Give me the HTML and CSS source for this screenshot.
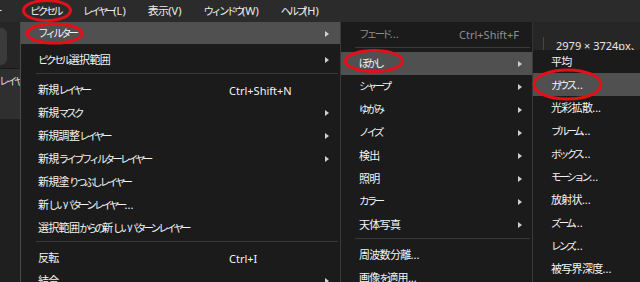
FILE: index.html
```html
<!DOCTYPE html>
<html lang="ja">
<head>
<meta charset="utf-8">
<title>Pixel menu</title>
<link rel="stylesheet" href="styles.css">
</head>
<body>
<div class="app">
  <nav class="menubar jp">
    <span class="mb-item mb-cut">ー</span>
    <span class="mb-item">ピクセル</span>
    <span class="mb-item">レイヤー<span class="a">(L)</span></span>
    <span class="mb-item"><span class="k">表示</span><span class="a">(V)</span></span>
    <span class="mb-item">ウィンドウ<span class="a">(W)</span></span>
    <span class="mb-item">ヘルプ<span class="a">(H)</span></span>
  </nav>
  <div class="toolbar">
    <div class="tool-btn"></div>
    <div class="tool-right"><span class="doc-info">2979 × 3724px、1</span></div>
  </div>
  <div class="panel-tab jp"><span class="tab-label">レイヤー</span></div>
  <div class="panel-body"></div>

  <ul class="menu menu-main">
    <li class="row active first"><span class="label jp">フィルター</span><span class="key"></span><i class="arrow"></i></li>
    <li class="row"><span class="label jp">ピクセル<span class="k">選択範囲</span></span><span class="key"></span><i class="arrow"></i></li>
    <li class="sep"></li>
    <li class="row"><span class="label jp"><span class="k">新規</span>レイヤー</span><span class="key">Ctrl+Shift+N</span></li>
    <li class="row"><span class="label jp"><span class="k">新規</span>マスク</span><span class="key"></span><i class="arrow"></i></li>
    <li class="row"><span class="label jp"><span class="k">新規調整</span>レイヤー</span><span class="key"></span><i class="arrow"></i></li>
    <li class="row"><span class="label jp"><span class="k">新規</span>ライブフィルターレイヤー</span><span class="key"></span><i class="arrow"></i></li>
    <li class="row"><span class="label jp"><span class="k">新規塗</span>りつぶしレイヤー</span></li>
    <li class="row"><span class="label jp"><span class="k">新</span>しいパターンレイヤー<span class="a">...</span></span></li>
    <li class="row"><span class="label jp"><span class="k">選択範囲</span>からの<span class="k">新</span>しいパターンレイヤー</span></li>
    <li class="sep"></li>
    <li class="row"><span class="label jp"><span class="k">反転</span></span><span class="key">Ctrl+I</span></li>
    <li class="row"><span class="label jp"><span class="k">結合</span></span><span class="key"></span><i class="arrow"></i></li>
  </ul>

  <ul class="menu menu-filter">
    <li class="row disabled"><span class="label jp">フェード<span class="a">...</span></span><span class="key">Ctrl+Shift+F</span></li>
    <li class="sep"></li>
    <li class="row active"><span class="label jp">ぼかし</span><span class="key"></span><i class="arrow"></i></li>
    <li class="row"><span class="label jp">シャープ</span><span class="key"></span><i class="arrow"></i></li>
    <li class="row"><span class="label jp">ゆがみ</span><span class="key"></span><i class="arrow"></i></li>
    <li class="row"><span class="label jp">ノイズ</span><span class="key"></span><i class="arrow"></i></li>
    <li class="row"><span class="label jp"><span class="k">検出</span></span><span class="key"></span><i class="arrow"></i></li>
    <li class="row"><span class="label jp"><span class="k">照明</span></span><span class="key"></span><i class="arrow"></i></li>
    <li class="row"><span class="label jp">カラー</span><span class="key"></span><i class="arrow"></i></li>
    <li class="row"><span class="label jp"><span class="k">天体写真</span></span><span class="key"></span><i class="arrow"></i></li>
    <li class="sep"></li>
    <li class="row"><span class="label jp"><span class="k">周波数分離</span><span class="a">...</span></span></li>
    <li class="row"><span class="label jp"><span class="k">画像</span>を<span class="k">適用</span><span class="a">...</span></span></li>
  </ul>

  <ul class="menu menu-blur">
    <li class="row"><span class="label jp"><span class="k">平均</span></span></li>
    <li class="row active"><span class="label jp">ガウス<span class="a">...</span></span></li>
    <li class="row"><span class="label jp"><span class="k">光彩拡散</span><span class="a">...</span></span></li>
    <li class="row"><span class="label jp">ブルーム<span class="a">...</span></span></li>
    <li class="row"><span class="label jp">ボックス<span class="a">...</span></span></li>
    <li class="row"><span class="label jp">モーション<span class="a">...</span></span></li>
    <li class="row"><span class="label jp"><span class="k">放射状</span><span class="a">...</span></span></li>
    <li class="row"><span class="label jp">ズーム<span class="a">...</span></span></li>
    <li class="row"><span class="label jp">レンズ<span class="a">...</span></span></li>
    <li class="row"><span class="label jp"><span class="k">被写界深度</span><span class="a">...</span></span></li>
  </ul>

  <svg class="marks" width="640" height="282" viewBox="0 0 640 282" aria-hidden="true">
    <ellipse cx="47" cy="10.5" rx="23.5" ry="10" />
    <ellipse cx="54.5" cy="33.5" rx="27.5" ry="9.5" />
    <ellipse cx="374" cy="61" rx="28.5" ry="10.5" />
    <ellipse cx="567.5" cy="84.5" rx="33.5" ry="14.5" />
  </svg>
</div>
</body>
</html>
```

FILE: styles.css
```css
* { box-sizing: border-box; }

html, body {
  margin: 0;
  padding: 0;
  background: #1e1e1e;
}

body {
  width: 640px;
  height: 282px;
  overflow: hidden;
  font-family: "Noto Sans", "Noto Sans CJK JP", sans-serif;
  font-size: 11px;
  color: #f4f4f4;
}

/* Japanese text: kana are set narrow, kanji and latin in their own spans */
.jp {
  font-size: 10.5px;
  letter-spacing: -2.8px;
}

.k {
  font-size: 11px;
  letter-spacing: -0.7px;
}

.a {
  font-size: 11px;
  letter-spacing: 0;
}

.app {
  position: relative;
  width: 640px;
  height: 282px;
  overflow: hidden;
}

/* ---------- menu bar ---------- */
.menubar {
  display: flex;
  height: 22px;
  background: #2b2b2b;
  color: #ececec;
  line-height: 22px;
  white-space: nowrap;
}

.mb-item {
  padding: 0 11px;
}

.mb-cut {
  margin-left: -8px;
  width: 27px;
  padding: 0;
  overflow: hidden;
}

/* ---------- toolbar / background ---------- */
.toolbar {
  display: flex;
  height: 46px;
  background: #262626;
}

.tool-btn {
  margin: 6px 0 0 -10px;
  width: 17px;
  height: 37px;
  border-radius: 6px;
  background: #3b3b3b;
}

.tool-right {
  margin: 15px 0 0 auto;
  width: 97px;
  border-left: 1px solid #454545;
  padding: 2px 0 0 12px;
  line-height: 14px;
  color: #e6e6e6;
  white-space: nowrap;
}

.panel-tab {
  height: 51px;
  border-top: 1px solid #1a1a1a;
  background: #2f2f2f;
  padding-top: 3px;
  line-height: 18px;
  color: #d8d8d8;
  white-space: nowrap;
}

.tab-label {
  margin-left: -1px;
}

.panel-body {
  height: 200px;
  background: #1f1f1f;
}

/* ---------- menus ---------- */
.menu {
  position: absolute;
  margin: 0;
  padding: 0;
  list-style: none;
  background: #1b1b1b;
  white-space: nowrap;
}

.menu-main {
  left: 20px;
  top: 22px;
  width: 321px;
  height: 270px;
  border-left: 1px solid #4a4a4a;
  border-right: 1px solid #3a3a3a;
}

.menu-filter {
  left: 340px;
  top: 22px;
  width: 193px;
  height: 270px;
  border-left: 1px solid #3a3a3a;
  border-right: 1px solid #333333;
}

.menu-blur {
  left: 532px;
  top: 50px;
  width: 120px;
  height: 240px;
  border-left: 1px solid #3a3a3a;
}

.row {
  display: grid;
  align-items: center;
  height: 23px;
  line-height: 23px;
}

.menu-main .row {
  grid-template-columns: 191px 1fr 4px;
  padding: 0 11px 0 17px;
}

.menu-main .row.first {
  height: 22px;
  margin-bottom: 4px;
}

.menu-filter .row {
  grid-template-columns: 100px 1fr 4px;
  padding: 0 10px 0 18px;
}

.menu-blur .row {
  padding: 0 0 0 18px;
}

.row.active {
  background: #505050;
}

.row.disabled {
  color: #8f8f8f;
}

.key {
  font-size: 11px;
  letter-spacing: 0;
}

.arrow {
  display: block;
  width: 0;
  height: 0;
  border-left: 4px solid #d0d0d0;
  border-top: 3px solid transparent;
  border-bottom: 3px solid transparent;
}

.sep {
  height: 5px;
}

.sep::before {
  content: "";
  display: block;
  height: 1px;
  margin-top: 2px;
  background: #3a3a3a;
}

.menu-main .sep::before {
  margin-left: 15px;
  margin-right: 2px;
}

.menu-filter .sep::before {
  margin-left: 14px;
  margin-right: 2px;
}

/* ---------- red annotation marks ---------- */
.marks {
  position: absolute;
  left: 0;
  top: 0;
  pointer-events: none;
}

.marks ellipse {
  fill: none;
  stroke: #e3101a;
  stroke-width: 3;
}
```
